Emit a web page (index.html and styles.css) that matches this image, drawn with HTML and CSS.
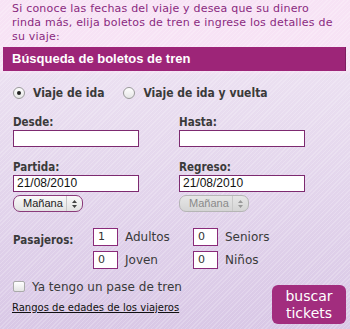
FILE: index.html
```html
<!DOCTYPE html>
<html lang="es">
<head>
<meta charset="utf-8">
<link rel="stylesheet" href="styles.css">
</head>
<body>
<div class="page">
  <p class="intro">Si conoce las fechas del viaje y desea que su dinero<br>rinda más, elija boletos de tren e ingrese los detalles de<br>su viaje:</p>
  <div class="bar">Búsqueda de boletos de tren</div>
  <form class="panel">
    <div class="trip">
      <label class="opt"><span class="radio on"></span>Viaje de ida</label>
      <label class="opt"><span class="radio"></span>Viaje de ida y vuelta</label>
    </div>
    <div class="grid">
      <div class="field">
        <div class="lbl">Desde:</div>
        <div class="txt"></div>
      </div>
      <div class="field">
        <div class="lbl">Hasta:</div>
        <div class="txt"></div>
      </div>
      <div class="field">
        <div class="lbl">Partida:</div>
        <div class="txt">21/08/2010</div>
        <div class="sel">Mañana<span class="arr"><svg width="7" height="10" viewBox="0 0 7 10"><path d="M3.5 1 L6 4 H1 Z M3.5 9 L6 6 H1 Z" fill="#444"/></svg></span></div>
      </div>
      <div class="field">
        <div class="lbl">Regreso:</div>
        <div class="txt">21/08/2010</div>
        <div class="sel off">Mañana<span class="arr"><svg width="7" height="10" viewBox="0 0 7 10"><path d="M3.5 1 L6 4 H1 Z M3.5 9 L6 6 H1 Z" fill="#999"/></svg></span></div>
      </div>
    </div>
    <div class="pax">
      <div class="lbl paxlbl">Pasajeros:</div>
      <div class="paxgrid">
        <div class="pi"><span class="num">1</span>Adultos</div>
        <div class="pi"><span class="num">0</span>Seniors</div>
        <div class="pi"><span class="num">0</span>Joven</div>
        <div class="pi"><span class="num">0</span>Niños</div>
      </div>
    </div>
    <div class="bottom">
      <div class="left">
        <label class="chk"><span class="box"></span>Ya tengo un pase de tren</label>
        <a class="link" href="#">Rangos de edades de los viajeros</a>
      </div>
      <div class="btn">buscar<br>tickets</div>
    </div>
  </form>
</div>
</body>
</html>
```
FILE: styles.css
```css
html, body { margin: 0; padding: 0; }
body {
  width: 350px;
  height: 329px;
  overflow: hidden;
  font-family: "DejaVu Sans", sans-serif;
  background:
    repeating-linear-gradient(135deg, rgba(255,255,255,0.2) 0 1px, rgba(255,255,255,0) 1px 3px),
    linear-gradient(#f7e3f5 0, #f7e3f5 70px, #ebe0f1 75px, #d9c8e6 329px);
}
.page { padding: 0; }
.intro {
  box-sizing: border-box;
  margin: 0;
  padding: 2px 0 0 12px;
  font-size: 11px;
  letter-spacing: 0.2px;
  line-height: 14px;
  color: #8a2a80;
  height: 47px;
  white-space: nowrap;
}
.bar {
  margin: 0 4px 0 3px;
  height: 24px;
  line-height: 24px;
  padding-left: 9px;
  background: #9d2578;
  border-right: 1px solid #7e1c60;
  color: #fff;
  font-family: "Liberation Sans", Arial, sans-serif;
  font-weight: bold;
  font-size: 13px;
}
.panel { margin: 0; padding: 16px 0 0 13px; }
.trip { display: flex; gap: 19px; height: 12px; align-items: center; }
.opt {
  display: flex; align-items: center; gap: 8px;
  font-family: "DejaVu Sans Condensed", "DejaVu Sans", sans-serif;
  font-weight: bold; font-size: 12px; color: #3a3a3a;
}
.radio {
  width: 10px; height: 10px; border-radius: 50%;
  border: 1px solid #999;
  background: linear-gradient(#fff, #e6e6e6);
  display: inline-flex; align-items: center; justify-content: center;
}
.radio.on::after {
  content: ""; width: 4px; height: 4px; border-radius: 50%; background: #222;
}
.grid {
  margin-top: 16px;
  display: grid;
  grid-template-columns: 166px 140px;
  row-gap: 13px;
}
.lbl {
  font-family: "DejaVu Sans Condensed", "DejaVu Sans", sans-serif;
  font-weight: bold; font-size: 11.5px; color: #3a3a3a; height: 14px; line-height: 14px;
}
.txt {
  margin-top: 1px;
  box-sizing: border-box;
  width: 126px; height: 17px;
  border: 1px solid #7d2a70;
  background: #fff;
  font-family: "Liberation Sans", Arial, sans-serif;
  font-size: 12px;
  line-height: 15px;
  padding-left: 3px;
  color: #111;
}
.sel {
  margin-top: 3px;
  box-sizing: border-box;
  width: 70px; height: 17px;
  border: 1px solid #8a3a7a;
  border-radius: 7px;
  background: linear-gradient(#fafafa, #e2e2e2);
  font-family: "Liberation Sans", Arial, sans-serif;
  font-size: 11px;
  line-height: 15px;
  padding-left: 9px;
  color: #222;
  position: relative;
}
.sel .arr {
  position: absolute; right: 0; top: 0; bottom: 0; width: 15px;
  border-left: 1px solid #c8c8c8;
  display: flex; align-items: center; justify-content: center;
}
.sel.off { border-color: #b5b5b5; color: #8a8a8a; background: linear-gradient(#e6e6e6, #d4d4d4); }
.pax { display: flex; margin-top: 16px; }
.paxlbl { width: 80px; margin-top: 5px; }
.paxgrid { display: grid; grid-template-columns: 100px 100px; row-gap: 5px; }
.pi { display: flex; align-items: center; gap: 7px; font-size: 12px; color: #3a3a3a; }
.num {
  box-sizing: border-box;
  width: 25px; height: 18px;
  border: 1px solid #8a2a7a;
  background: #fff;
  font-size: 11px;
  line-height: 16px;
  padding-left: 4px;
  color: #333;
}
.bottom { display: flex; justify-content: space-between; margin-top: 11px; }
.left { display: flex; flex-direction: column; }
.chk { display: flex; align-items: center; gap: 7px; font-size: 12px; color: #3a3a3a; height: 13px; }
.box {
  box-sizing: border-box; width: 12px; height: 11px;
  border: 1px solid #aaa; border-radius: 2px;
  background: linear-gradient(#fff, #e4e4e4);
}
.link {
  margin-top: 9px;
  margin-left: -1px;
  font-size: 10px;
  color: #111;
  text-decoration: underline;
}
.btn {
  margin-top: 5px;
  margin-right: 4px;
  width: 74px; height: 39px;
  box-sizing: border-box;
  border-radius: 6px;
  background: #a22d7e;
  color: #fff;
  font-size: 14px;
  line-height: 17px;
  text-align: center;
  padding-top: 3px;
}
```
